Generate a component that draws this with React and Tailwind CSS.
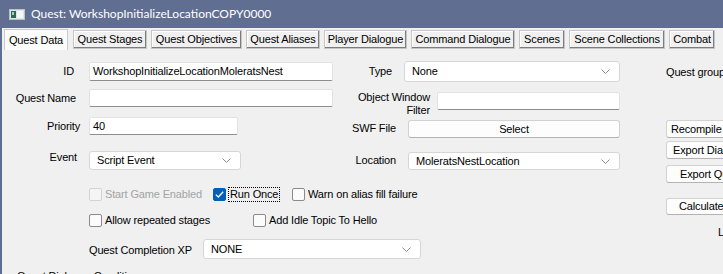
import React from "react";

const ui = "font-['Liberation_Sans',Arial,sans-serif] text-[11px] tracking-[-0.15px] text-black";

const tabs = [
  { label: "Quest Data", w: "w-[64px]", active: true },
  { label: "Quest Stages", w: "w-[74px]" },
  { label: "Quest Objectives", w: "w-[91px]" },
  { label: "Quest Aliases", w: "w-[74px]" },
  { label: "Player Dialogue", w: "w-[83px]" },
  { label: "Command Dialogue", w: "w-[104px]" },
  { label: "Scenes", w: "w-[46px]" },
  { label: "Scene Collections", w: "w-[96px]" },
  { label: "Combat", w: "w-[46px]" },
];

function Chevron() {
  return (
    <svg width="9" height="5" viewBox="0 0 9 5" className="shrink-0">
      <polyline points="0.5,0.5 4.5,4.5 8.5,0.5" fill="none" stroke="#8c8c8c" strokeWidth="1" />
    </svg>
  );
}

function TextInput({ className = "", value = "" }) {
  return (
    <div className={`bg-white border border-[#e2e2e2] border-b-[#8d8d8d] rounded-[2px] pl-[3px] flex items-center whitespace-nowrap overflow-hidden ${className}`}>
      {value}
    </div>
  );
}

function Select({ className = "", value }) {
  return (
    <div className={`bg-white border border-[#d6d6d6] rounded-[3px] pl-[7px] pr-[9px] flex items-center justify-between ${className}`}>
      <span className="whitespace-nowrap">{value}</span>
      <Chevron />
    </div>
  );
}

function Button({ className = "", children }) {
  return (
    <div className={`bg-[#fdfdfd] border border-[#d2d2d2] border-b-[#b3b3b3] rounded-[3px] flex items-center whitespace-nowrap overflow-hidden ${className}`}>
      {children}
    </div>
  );
}

function Checkbox({ label, checked, disabled, focus, className = "" }) {
  return (
    <div className={`flex items-center h-[13px] ${className}`}>
      <div
        className={`w-[13px] h-[13px] rounded-[2px] shrink-0 flex items-center justify-center ${
          checked
            ? "bg-[#005fb8] border border-[#005fb8]"
            : disabled
            ? "bg-[#f5f5f5] border border-[#d3d3d3]"
            : "bg-[#fbfbfb] border border-[#8a8a8a]"
        }`}
      >
        {checked && (
          <svg width="9" height="7" viewBox="0 0 9 7">
            <polyline points="0.8,3.6 3.3,6 8.2,0.8" fill="none" stroke="white" strokeWidth="1.3" />
          </svg>
        )}
      </div>
      <span
        className={`whitespace-nowrap leading-[13px] ${disabled ? "text-[#a3a3a3]" : ""} ${
          focus ? "ml-[2px] border border-dotted border-black px-[1px]" : "ml-[3px]"
        }`}
      >
        {label}
      </span>
    </div>
  );
}

export default function App() {
  return (
    <div className={`w-[723px] h-[274px] overflow-hidden bg-[#f0f0f0] ${ui}`}>
      {/* title bar */}
      <div className="h-[28px] bg-[#5f6e91] flex items-center pl-[9px]">
        <svg width="16" height="11" viewBox="0 0 16 11" className="shrink-0">
          <rect x="0.5" y="0.5" width="15" height="10" fill="#dfe6e8" stroke="#b9c2c8" />
          <rect x="2" y="2" width="5" height="7" fill="#2e6b52" />
          <rect x="3" y="3" width="2" height="3" fill="#9fd3bd" />
          <rect x="8" y="2" width="6" height="7" fill="#f4f7f7" />
        </svg>
        <span className="ml-[6px] text-white text-[12px] tracking-normal font-['Segoe_UI',Lato,'Noto_Sans',sans-serif] whitespace-nowrap">
          Quest: WorkshopInitializeLocationCOPY0000
        </span>
      </div>

      <div className="border-l-2 border-[#5f6e91] h-[246px]">
        {/* tabs */}
        <div className="flex items-start pl-[2px] pt-[1px] h-[22px]">
          {tabs.map((t, i) =>
            t.active ? (
              <div
                key={i}
                className={`${t.w} h-[21px] bg-[#fbfbfb] border border-b-0 border-[#c9c9c9] flex items-center justify-center whitespace-nowrap mr-[5px]`}
              >
                {t.label}
              </div>
            ) : (
              <div
                key={i}
                className={`${t.w} h-[19px] mt-[1px] bg-[#f0f0f0] border border-[#c6c6c6] shadow-[inset_-1px_-1px_0_#7d7d7d,inset_1px_1px_0_#ffffff] flex items-center justify-center whitespace-nowrap mr-[4px]`}
              >
                {t.label}
              </div>
            )
          )}
        </div>

        <div className="flex">
          {/* form */}
          <div className="w-[664px] shrink-0 flex flex-col">
            {/* row 1 */}
            <div className="flex items-center h-[21px] mt-[11px]">
              <div className="w-[87px] pr-[15px] text-right">ID</div>
              <TextInput className="w-[244px] h-[19px]" value="WorkshopInitializeLocationMoleratsNest" />
              <div className="w-[71px] pr-[12px] text-right">Type</div>
              <Select className="w-[216px] h-[21px]" value="None" />
            </div>

            {/* row 2 */}
            <div className="flex items-start h-[23px] mt-[7px]">
              <div className="w-[87px] pr-[13px] h-[18px] flex items-center justify-end">Quest Name</div>
              <TextInput className="w-[244px] h-[18px]" />
              <div className="w-[97px] text-right leading-[13px] mt-[2px]">
                Object Window
                <br />
                Filter
              </div>
              <TextInput className="w-[183px] h-[18px] ml-[7px] mt-[3px]" />
            </div>

            {/* row 3 */}
            <div className="flex items-start h-[21px] mt-[5px]">
              <div className="w-[87px] pr-[9px] h-[18px] flex items-center justify-end">Priority</div>
              <TextInput className="w-[149px] h-[18px]" value="40" />
              <div className="w-[158px] text-right h-[18px] mt-[2px] flex items-center justify-end">SWF File</div>
              <Button className="w-[212px] h-[18px] ml-[12px] mt-[3px] justify-center">Select</Button>
            </div>

            {/* row 4 */}
            <div className="flex items-start h-[19px] mt-[13px]">
              <div className="w-[87px] pr-[12px] leading-[13px] text-right">Event</div>
              <Select className="w-[152px] h-[19px]" value="Script Event" />
              <div className="w-[155px] text-right leading-[13px] mt-[3px]">Location</div>
              <Select className="w-[212px] h-[18px] ml-[12px] mt-[1px]" value="MoleratsNestLocation" />
            </div>

            {/* checkboxes */}
            <div className="flex pl-[87px] mt-[18px]">
              <Checkbox className="w-[124px]" label="Start Game Enabled" disabled />
              <Checkbox className="w-[79px]" label="Run Once" checked focus />
              <Checkbox label="Warn on alias fill failure" />
            </div>
            <div className="flex pl-[87px] mt-[13px]">
              <Checkbox className="w-[164px]" label="Allow repeated stages" />
              <Checkbox label="Add Idle Topic To Hello" />
            </div>

            {/* completion xp */}
            <div className="flex items-center h-[20px] mt-[12px] pl-[87px]">
              <div className="w-[114px] whitespace-nowrap pt-[3px]">Quest Completion XP</div>
              <Select className="w-[218px] h-[20px]" value="NONE" />
            </div>

            <div className="pl-[15px] mt-[10px] leading-[14px] whitespace-nowrap">Quest Dialogue Conditions</div>
          </div>

          {/* right column */}
          <div className="flex flex-col w-[120px] shrink-0">
            <div className="mt-[15px] leading-[14px] whitespace-nowrap">Quest groups</div>
            <Button className="w-[110px] h-[18px] mt-[41px] pl-[4px]">Recompile Scripts</Button>
            <Button className="w-[110px] h-[18px] mt-[3px] pl-[6px]">Export Dialogue</Button>
            <Button className="w-[110px] h-[18px] mt-[6px] pl-[13px]">Export Quest Text</Button>
            <Button className="w-[110px] h-[17px] mt-[15px] pl-[12px]">Calculate Reachability</Button>
            <div className="mt-[10px] ml-[52px] leading-[14px]">L</div>
          </div>
        </div>
      </div>
    </div>
  );
}
